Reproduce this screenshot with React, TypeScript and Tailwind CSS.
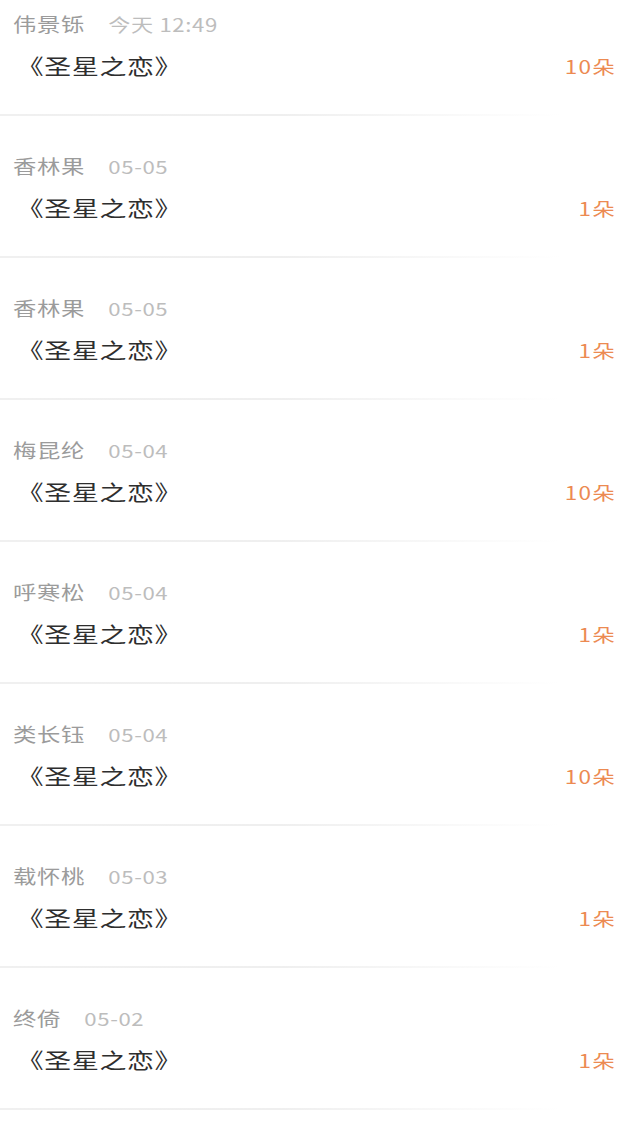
import React from "react";

type Gift = {
  name: string;
  time: string;
  book: string;
  count: number;
};

const gifts: Gift[] = [
  { name: "伟景铄", time: "今天 12:49", book: "《圣星之恋》", count: 10 },
  { name: "香林果", time: "05-05", book: "《圣星之恋》", count: 1 },
  { name: "香林果", time: "05-05", book: "《圣星之恋》", count: 1 },
  { name: "梅昆纶", time: "05-04", book: "《圣星之恋》", count: 10 },
  { name: "呼寒松", time: "05-04", book: "《圣星之恋》", count: 1 },
  { name: "类长钰", time: "05-04", book: "《圣星之恋》", count: 10 },
  { name: "载怀桃", time: "05-03", book: "《圣星之恋》", count: 1 },
  { name: "终倚", time: "05-02", book: "《圣星之恋》", count: 1 },
];

// 原图横向被拉宽，用 scale-x 还原字形比例
function GiftRow({ gift, first }: { gift: Gift; first: boolean }) {
  return (
    <div>
      <div className={`${first ? "pt-[10px]" : "pt-[36px]"} pb-[32px] pl-[13px] pr-[24px]`}>
        {/* 送花人 + 时间 */}
        <div className="flex items-center h-[28px] leading-[28px] w-max origin-left scale-x-[1.23]">
          <span className="text-[19px] tracking-[0.5px] text-[#9b9b9b]">{gift.name}</span>
          <span className="ml-[19px] text-[18px] tracking-[0.5px] text-[#bdbdbd]">{gift.time}</span>
        </div>
        {/* 书名 + 数量 */}
        <div className="flex items-center justify-between h-[32px] mt-[12px]">
          <span className="inline-block pl-[3px] origin-left scale-x-[1.28] text-[21px] tracking-[0.5px] text-[#2e2e2e]">
            {gift.book}
          </span>
          <span className="inline-block origin-right scale-x-[1.25] text-[18px] tracking-[1px] text-[#ec8a52]">
            {gift.count}朵
          </span>
        </div>
      </div>
      <div className="h-[2px] w-[560px] bg-linear-to-r from-[#f0f0f0] via-[#efefef] to-transparent" />
    </div>
  );
}

export default function App() {
  return (
    <div
      className="w-[640px] h-[1137px] overflow-hidden bg-white"
      style={{ fontFamily: '"Noto Sans CJK SC", "Noto Sans", sans-serif' }}
    >
      {gifts.map((g, i) => (
        <GiftRow key={i} gift={g} first={i === 0} />
      ))}
    </div>
  );
}
